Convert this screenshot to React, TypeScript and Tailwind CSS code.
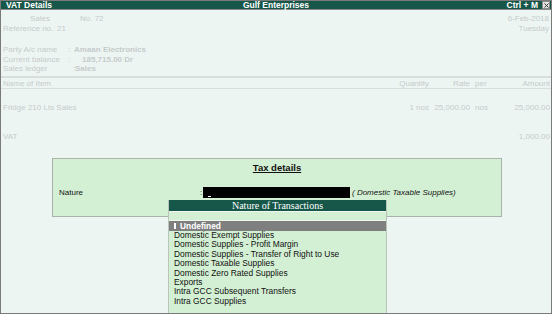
import React from 'react'

const faint = 'text-[#c6cbcb]'

const items = [
  'Domestic Exempt Supplies',
  'Domestic Supplies - Profit Margin',
  'Domestic Supplies - Transfer of Right to Use',
  'Domestic Taxable Supplies',
  'Domestic Zero Rated Supplies',
  'Exports',
  'Intra GCC Subsequent Transfers',
  'Intra GCC Supplies',
]

function TitleBar() {
  return (
    <div className="relative flex h-[8px] items-center bg-[#17574a] text-[8.5px] font-bold leading-[8px] text-white border-b border-[#8a8a8a] box-content">
      <span className="pl-[5px]">VAT Details</span>
      <span className="absolute left-0 right-0 text-center">Gulf Enterprises</span>
      <span className="ml-auto mr-[4px] relative">Ctrl + M</span>
      <span className="relative mr-[1px] flex h-[8px] w-[8px] items-center justify-center border border-[#8a8a8a] bg-[#e4e4e4]">
        <svg width="5" height="5" viewBox="0 0 5 5">
          <path d="M0.5 0.5L4.5 4.5M4.5 0.5L0.5 4.5" stroke="#333" strokeWidth="1" />
        </svg>
      </span>
    </div>
  )
}

function Header() {
  return (
    <div className={`px-[2px] text-[8px] leading-[9.5px] ${faint}`}>
      <div className="mt-[4px] flex">
        <span className="ml-[27px] w-[50px]">Sales</span>
        <span>No. 72</span>
        <span className="ml-auto">6-Feb-2018</span>
      </div>
      <div className="flex">
        <span className="w-[54px]">Reference no.</span>
        <span>21</span>
        <span className="ml-auto">Tuesday</span>
      </div>
      <div className="mt-[12px] flex">
        <span className="w-[65px]">Party A/c name</span>
        <span className="w-[6px]">:</span>
        <span className="font-semibold">Amaan Electronics</span>
      </div>
      <div className="flex">
        <span className="w-[65px]">Current balance</span>
        <span className="w-[14px]">:</span>
        <span className="font-semibold">185,715.00 Dr</span>
      </div>
      <div className="flex">
        <span className="w-[70px]">Sales ledger</span>
        <span className="w-[2px]">:</span>
        <span className="font-semibold">Sales</span>
      </div>
    </div>
  )
}

function ItemRow({ name, qty, rate, per, amount, className }: { name: string; qty?: string; rate?: string; per?: string; amount?: string; className?: string }) {
  return (
    <div className={`flex h-[9.5px] pl-[2px] pr-[1px] text-[8px] leading-[9.5px] ${faint} ${className ?? ''}`}>
      <span className="flex-1">{name}</span>
      <span className="w-[60px] pr-[1px] text-right">{qty}</span>
      <span className="w-[45px] pr-[5px] text-right">{rate}</span>
      <span className="w-[25px]">{per}</span>
      <span className="w-[50px] text-right">{amount}</span>
    </div>
  )
}

function TaxDetails() {
  return (
    <div className="absolute left-[51px] top-[157px] h-[59px] w-[450px] border border-[#a9b3a9] bg-[#d4f0d4] text-[8px] text-[#111]">
      <div className="pt-[3px] text-center text-[9.5px] font-bold leading-[12px] underline underline-offset-[1px]">
        Tax details
      </div>
      <div className="mt-[13px] flex h-[11px] items-center pl-[6px]">
        <span className="w-[141px]">Nature</span>
        <span className="w-[3px]">:</span>
        <span className="relative h-[11px] w-[147px] bg-black">
          <span className="absolute bottom-[1px] left-[5px] h-[1px] w-[3px] bg-white" />
        </span>
        <span className="ml-[2px] italic">( Domestic Taxable Supplies)</span>
      </div>
    </div>
  )
}

function NaturePopup() {
  return (
    <div className="absolute left-[167px] top-[199px] bottom-0 w-[219px] border-x border-[#b9c5b9] bg-[#d4f0d4]">
      <div className="h-[11px] bg-[#17574a] text-center font-['Liberation_Serif',serif] text-[10px] leading-[11px] text-white">
        Nature of Transactions
      </div>
      <div className="h-[10px] border-y border-[#eef8ee]" />
      <div className="flex h-[10px] items-center bg-[#7f7f7f] text-[8.4px] font-bold text-white">
        <span className="ml-[5px] mr-[4px] h-[6px] w-[2px] bg-white" />
        <span>Undefined</span>
      </div>
      <div className="pl-[5px] text-[8.4px] leading-[9.4px] text-[#111]">
        {items.map(t => (
          <div key={t} className="h-[9.4px]">{t}</div>
        ))}
      </div>
    </div>
  )
}

export default function App() {
  return (
    <div className="relative h-[314px] w-[552px] overflow-hidden border border-[#7a7a7a] bg-[#edf5f3] font-['Liberation_Sans',Arial,sans-serif]">
      <TitleBar />
      <Header />
      <div className="mt-[2px] h-[2px] bg-[#d9dddd]" />
      <ItemRow name="Name of Item" qty="Quantity" rate="Rate" per="per" amount="Amount" className="mt-[1px]" />
      <div className="h-[1px] bg-[#d9dddd]" />
      <ItemRow name="Fridge 210 Lts Sales" qty="1 nos" rate="25,000.00" per="nos" amount="25,000.00" className="mt-[14px]" />
      <ItemRow name="VAT" amount="1,000.00" className="mt-[19.5px]" />
      <TaxDetails />
      <NaturePopup />
    </div>
  )
}
